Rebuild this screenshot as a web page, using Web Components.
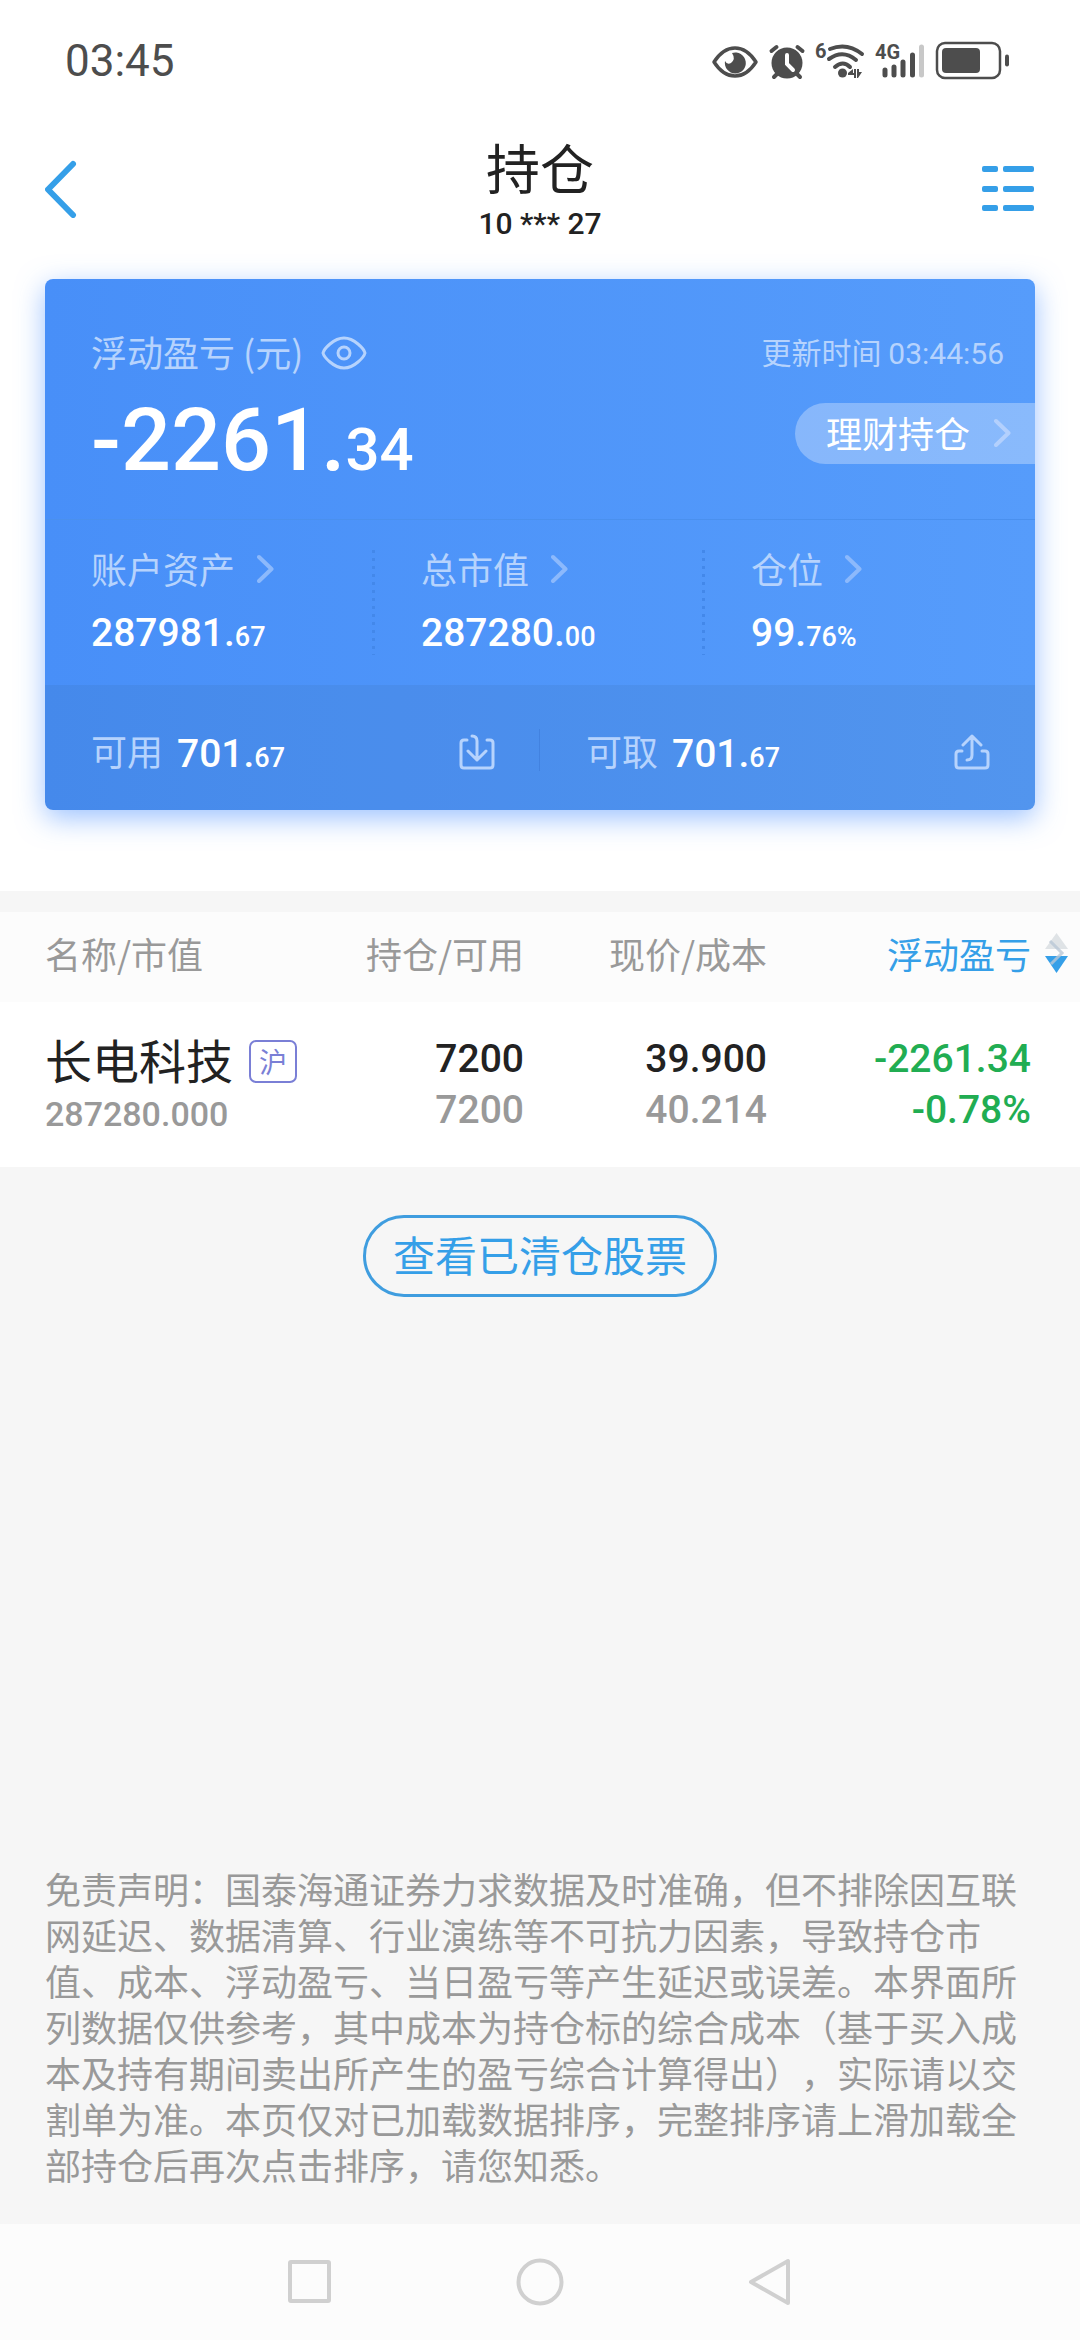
<!DOCTYPE html>
<html lang="zh-CN">
<head>
<meta charset="utf-8">
<meta name="viewport" content="width=device-width, initial-scale=1">
<title>持仓</title>
<style>
  body {
    margin: 0;
    font-family: "Noto Sans CJK SC", "Noto Sans", sans-serif;
    color: #222;
    background: #f6f6f6;
    --number-font: Roboto, "Noto Sans CJK SC", sans-serif;
  }
</style>
</head>
<body>
<holdings-page></holdings-page>

<!-- Page -->
<template id="holdings-page">
  <style>
    :host { display: flex; flex-direction: column; min-height: 100vh; }
    .top { background: #fff; padding-bottom: 81px; margin-bottom: 21px; }
    outline-button { align-self: center; margin: 48px 0; }
    disclaimer-note { margin-top: auto; }
  </style>
  <div class="top">
    <status-bar></status-bar>
    <page-header>持仓<span slot="account">10 *** 27</span></page-header>
    <profit-card></profit-card>
  </div>
  <holdings-table></holdings-table>
  <outline-button>查看已清仓股票</outline-button>
  <disclaimer-note>免责声明：国泰海通证券力求数据及时准确，但不排除因互联网延迟、数据清算、行业演练等不可抗力因素，导致持仓市值、成本、浮动盈亏、当日盈亏等产生延迟或误差。本界面所列数据仅供参考，其中成本为持仓标的综合成本（基于买入成本及持有期间卖出所产生的盈亏综合计算得出），实际请以交割单为准。本页仅对已加载数据排序，完整排序请上滑加载全部持仓后再次点击排序，请您知悉。</disclaimer-note>
  <nav-bar></nav-bar>
</template>

<!-- Phone status bar -->
<template id="status-bar">
  <style>
    :host {
      box-sizing: border-box;
      display: flex; align-items: center; justify-content: space-between;
      height: 116px; padding: 5px 71px 0 65px;
      color: #4d4d4d; font-family: var(--number-font); font-size: 44px;
    }
    .icons { display: flex; align-items: center; gap: 11px; }
    svg { display: block; overflow: visible; fill: none; stroke: currentColor; stroke-linecap: round; }
    .solid { fill: currentColor; stroke: none; }
    text { fill: currentColor; stroke: none; font-size: 20px; font-weight: 700; }
  </style>
  <span>03:45</span>
  <div class="icons">
    <svg width="46" height="40" viewBox="0 0 46 40">
      <path d="M2 21Q11 7 23 7Q35 7 44 21Q35 35 23 35Q11 35 2 21Z" stroke-width="3.500" stroke-linejoin="round"/>
      <path class="solid" d="M20 12A10.500 10.500 0 1 1 13 20Q15 24 19 22Q24 18 20 12Z"/>
    </svg>
    <svg width="36" height="40" viewBox="0 0 36 40">
      <circle class="solid" cx="18" cy="22" r="15.500"/>
      <path d="M2.500 10L7.500 6M33.500 10L28.500 6M5 36L9 32M31 36L27 32" stroke-width="4"/>
      <path d="M18 14V23L24 29" stroke="#fff" stroke-width="4"/>
    </svg>
    <svg width="48" height="40" viewBox="0 0 48 40">
      <text x="-1" y="17">6</text>
      <path d="M14 8Q31 1 46 13M13 18Q27 8 40 19M19 26Q27 19 34 26" stroke-width="4"/>
      <circle class="solid" cx="26.500" cy="32" r="4.500"/>
      <path class="solid" d="M32 32L37 28V32H38V28H40V37H38V34H32ZM41 28H43V31H46L42 37H41Z"/>
    </svg>
    <svg width="50" height="40" viewBox="0 0 50 40">
      <text x="0" y="18">4G</text>
      <path d="M10 29V34M19 26V34M28 21V34M37.500 14V34" stroke-width="5"/>
      <path d="M46.500 6V34" stroke="#c8c8c8" stroke-width="5"/>
    </svg>
    <svg width="73" height="40" viewBox="0 0 73 40">
      <rect x="1" y="2" width="63" height="35" rx="8" stroke-width="2.500"/>
      <rect class="solid" x="6" y="7" width="38" height="25" rx="4"/>
      <path d="M71 15.500V23.500" stroke-width="4"/>
    </svg>
  </div>
</template>

<!-- Title bar with back and menu buttons -->
<template id="page-header">
  <style>
    :host {
      display: grid; grid-template-columns: 60px 1fr 60px; align-items: center;
      padding: 19px 45px 37px;
    }
    h1 { margin: 0 0 7px; font-size: 54px; font-weight: 400; line-height: 64px; }
    .title { text-align: center; }
    .account { font-family: var(--number-font); font-size: 30px; font-weight: 500; line-height: 36px; }
    button { padding: 0; border: 0; background: none; color: #359fe8; }
    button:last-child { justify-self: end; }
    svg { display: block; }
  </style>
  <button aria-label="返回">
    <svg width="60" height="58" viewBox="0 0 60 58" fill="none" stroke="currentColor" stroke-width="6" stroke-linecap="round" stroke-linejoin="round"><path d="M28 4L3 29.500L28 55"/></svg>
  </button>
  <div class="title">
    <h1><slot></slot></h1>
    <div class="account"><slot name="account"></slot></div>
  </div>
  <button aria-label="菜单">
    <svg width="53" height="46" viewBox="0 0 53 46" fill="currentColor">
      <rect x="0" y="0" width="16" height="6" rx="2"/><rect x="21" y="0" width="31" height="6" rx="2"/>
      <rect x="0" y="20" width="16" height="6" rx="2"/><rect x="21" y="20" width="31" height="6" rx="2"/>
      <rect x="0" y="39" width="16" height="6" rx="2"/><rect x="21" y="39" width="31" height="6" rx="2"/>
    </svg>
  </button>
</template>

<template id="chevron-icon">
  <style>
    :host { display: block; }
    svg { display: block; }
  </style>
  <svg width="17" height="30" viewBox="0 0 17 30" fill="none" stroke="currentColor" stroke-width="4" stroke-linecap="round" stroke-linejoin="round"><path d="M2 4L14.500 16L2 28"/></svg>
</template>

<!-- Number with a smaller fraction -->
<template id="money-value">
  <style>
    :host { display: block; color: #fff; font-family: var(--number-font); font-size: 39px; font-weight: 500; line-height: 48px; }
    small { font-size: var(--fraction-size, 27px); line-height: 1; }
  </style>
  <slot></slot><small><slot name="fraction"></slot></small>
</template>

<!-- Blue summary card -->
<template id="profit-card">
  <style>
    :host {
      display: block; margin: 0 45px; border-radius: 8px; overflow: hidden;
      color: #b6d3fd;
      background: linear-gradient(90deg, #488ff8, #569cfb);
      box-shadow: 0 8px 28px rgba(75, 144, 255, .55);
    }
    .summary {
      display: flex; justify-content: space-between;
      padding: 48px 0 31px 46px;
      border-bottom: 1px solid #4a90ee;
    }
    .label { display: flex; align-items: center; gap: 18px; font-size: 36px; line-height: 48px; }
    .label button { padding: 4px 0 0; border: 0; background: none; color: inherit; }
    .label svg { display: block; }
    .total { font-size: 88px; line-height: 96px; margin-top: 17px; --fraction-size: 60px; }
    .side { display: flex; flex-direction: column; align-items: flex-end; gap: 28px; }
    time { padding-right: 31px; font-size: 30px; line-height: 48px; }
    .clock { font-family: var(--number-font); line-height: 1; }
    .wealth {
      display: flex; align-items: center; gap: 24px;
      height: 61px; padding: 0 24px 3px 31px; border: 0; border-radius: 31px 0 0 31px;
      color: #fff; background: rgba(255, 255, 255, .3);
      font: inherit; font-size: 36px; line-height: 48px;
    }
    .wealth chevron-icon { color: #b3d0fd; }
    .stats, .funds { display: grid; grid-template-columns: repeat(3, 1fr); }
    .funds { grid-template-columns: 1fr 1fr; background: rgba(50, 90, 130, .1); }
  </style>
  <div class="summary">
    <div>
      <div class="label">
        <span>浮动盈亏 (元)</span>
        <button aria-label="隐藏金额">
          <svg width="46" height="34" viewBox="0 0 46 34" fill="none" stroke="currentColor" stroke-width="3" stroke-linejoin="round"><path d="M2 17Q3 13 9 8Q16 2 23 2Q30 2 37 8Q43 13 44 17Q43 21 37 26Q30 32 23 32Q16 32 9 26Q3 21 2 17Z"/><circle cx="23" cy="17" r="6"/></svg>
        </button>
      </div>
      <money-value class="total">-2261.<span slot="fraction">34</span></money-value>
    </div>
    <div class="side">
      <time>更新时间 <span class="clock">03:44:56</span></time>
      <button class="wealth">理财持仓<chevron-icon></chevron-icon></button>
    </div>
  </div>
  <div class="stats">
    <stat-item divider>账户资产<money-value slot="value">287981.<span slot="fraction">67</span></money-value></stat-item>
    <stat-item divider>总市值<money-value slot="value">287280.<span slot="fraction">00</span></money-value></stat-item>
    <stat-item>仓位<money-value slot="value">99.<span slot="fraction">76%</span></money-value></stat-item>
  </div>
  <div class="funds">
    <fund-item divider>可用<money-value slot="value">701.<span slot="fraction">67</span></money-value>
      <svg slot="icon" width="36" height="36" viewBox="0 0 36 36" fill="none" stroke="currentColor" stroke-width="3" stroke-linecap="round" stroke-linejoin="round"><path d="M8 6H5Q2 6 2 9V31Q2 34 5 34H31Q34 34 34 31V9Q34 6 31 6H28M13 2Q18 2 18 7V26M9 17L18 26L27 17"/></svg>
    </fund-item>
    <fund-item>可取<money-value slot="value">701.<span slot="fraction">67</span></money-value>
      <svg slot="icon" width="36" height="36" viewBox="0 0 36 36" fill="none" stroke="currentColor" stroke-width="3" stroke-linecap="round" stroke-linejoin="round"><path d="M8 17H5Q2 17 2 20V31Q2 34 5 34H31Q34 34 34 31V20Q34 17 31 17H28M13 26Q18 26 18 21V2M9 11L18 2L27 11"/></svg>
    </fund-item>
  </div>
</template>

<template id="stat-item">
  <style>
    :host { display: flex; justify-content: space-between; padding: 24px 0 28px 46px; }
    .label { display: flex; align-items: center; gap: 22px; margin-bottom: 17px; font-size: 36px; line-height: 48px; }
    chevron-icon { color: #8cb9fc; }
    .dots { display: none; width: 3px; height: 105px; margin-top: 6px; background: repeating-linear-gradient(#4388ea 0 3px, transparent 3px 8px); }
    :host([divider]) .dots { display: block; }
  </style>
  <div>
    <div class="label"><span><slot></slot></span><chevron-icon></chevron-icon></div>
    <slot name="value"></slot>
  </div>
  <div class="dots"></div>
</template>

<template id="fund-item">
  <style>
    :host { display: flex; align-items: center; padding: 37px 0 32px 46px; font-size: 36px; line-height: 48px; }
    .label { margin-right: 14px; }
    .value { padding-top: 8px; }
    button { margin-left: auto; padding: 4px 0 0; border: 0; background: none; color: inherit; }
    ::slotted(svg) { display: block; }
    .line { width: 1px; height: 42px; margin-left: 44px; }
    :host([divider]) .line { background: #4282e0; }
  </style>
  <span class="label"><slot></slot></span>
  <div class="value"><slot name="value"></slot></div>
  <button aria-label="转账"><slot name="icon"></slot></button>
  <div class="line"></div>
</template>

<!-- Positions -->
<template id="holdings-table">
  <style>
    :host { display: block; background: #fff; }
    table { width: 100%; table-layout: fixed; border-collapse: collapse; text-align: right; }
    th, td { padding: 0; vertical-align: top; }
    th { padding: 17px 0 25px; font-size: 36px; font-weight: 400; line-height: 48px; color: #999; background: #fcfcfc; }
    td { padding: 32px 0 31px; font-family: var(--number-font); font-size: 39px; font-weight: 500; line-height: 51px; }
    th:first-child { padding-left: 45px; text-align: left; }
    td:first-child { padding: 29px 0 30px 45px; text-align: left; }
    th:last-child { padding-right: 12px; }
    td:last-child { padding-right: 49px; color: #21ad52; }
    .first { width: 310px; }
    .middle { width: 243px; }
    .last { width: 313px; }
    .sort {
      display: flex; align-items: center; gap: 14px; margin-left: auto;
      padding: 0; border: 0; background: none; color: #359fe8; font: inherit;
    }
    .name {
      display: flex; align-items: center; gap: 16px; margin-bottom: 4px; white-space: nowrap;
      font-family: "Noto Sans CJK SC", sans-serif; font-size: 47px; font-weight: 400; line-height: 56px;
    }
    .market {
      width: 44px; margin-top: 4px; border: 2px solid #7a7fd6; border-radius: 7px;
      color: #7a7fd6; font-size: 28px; line-height: 39px; text-align: center;
    }
    .worth { font-size: 34px; line-height: 46px; }
    .sub { color: #999; }
  </style>
  <table>
    <colgroup><col class="first"><col><col class="middle"><col class="last"></colgroup>
    <thead>
      <tr>
        <th>名称/市值</th>
        <th>持仓/可用</th>
        <th>现价/成本</th>
        <th>
          <button class="sort">浮动盈亏
            <svg width="23" height="40" viewBox="0 0 23 40"><path fill="#dfe3e6" d="M11.500 0L23 16H0Z"/><path fill="#359fe8" d="M0 23H23L11.500 40Z"/><path d="M5 8L17 20L6 31" fill="none" stroke="#b9c7d6" stroke-opacity=".8" stroke-width="3"/></svg>
          </button>
        </th>
      </tr>
    </thead>
    <tbody>
      <tr>
        <td>
          <div class="name">长电科技<span class="market">沪</span></div>
          <div class="worth sub">287280.000</div>
        </td>
        <td>7200<div class="sub">7200</div></td>
        <td>39.900<div class="sub">40.214</div></td>
        <td>-2261.34<div>-0.78%</div></td>
      </tr>
    </tbody>
  </table>
</template>

<template id="outline-button">
  <style>
    :host { display: block; }
    button {
      display: block; height: 82px; padding: 0 27px 4px; border: 3px solid #3f9ddf; border-radius: 41px;
      background: none; color: #359fe8; font: inherit; font-size: 42px; line-height: 60px;
    }
  </style>
  <button><slot></slot></button>
</template>

<template id="disclaimer-note">
  <style>
    :host { display: block; padding: 0 45px 37px; color: #999; }
    p { margin: 0; font-size: 36px; line-height: 46px; text-spacing-trim: space-all; }
  </style>
  <p><slot></slot></p>
</template>

<!-- System navigation -->
<template id="nav-bar">
  <style>
    :host { display: flex; align-items: center; justify-content: center; gap: 182px; height: 116px; background: #fcfcfc; }
    button { padding: 0; border: 0; background: none; }
    svg { display: block; fill: none; stroke: #d0d0d0; stroke-width: 4; stroke-linejoin: round; }
  </style>
  <button aria-label="最近任务"><svg width="48" height="48" viewBox="0 0 48 48"><rect x="4" y="4" width="39" height="39" rx="1"/></svg></button>
  <button aria-label="主屏幕"><svg width="48" height="48" viewBox="0 0 48 48"><circle cx="24" cy="24" r="21.500"/></svg></button>
  <button aria-label="返回"><svg width="48" height="48" viewBox="0 0 48 48"><path d="M42 3V45L5 24Z"/></svg></button>
</template>

<script>
// Base element: clones the template that carries the element's own name
class TemplateElement extends HTMLElement {
    constructor() {
        super();
        this.attachShadow({ mode: "open" });
        const template = document.getElementById(this.localName);
        this.shadowRoot.appendChild(template.content.cloneNode(true));
    }
}

class StatusBar extends TemplateElement {}
class PageHeader extends TemplateElement {}
class ChevronIcon extends TemplateElement {}
class MoneyValue extends TemplateElement {}
class StatItem extends TemplateElement {}
class FundItem extends TemplateElement {}
class ProfitCard extends TemplateElement {}
class HoldingsTable extends TemplateElement {}
class OutlineButton extends TemplateElement {}
class DisclaimerNote extends TemplateElement {}
class NavBar extends TemplateElement {}
class HoldingsPage extends TemplateElement {}

customElements.define("status-bar", StatusBar);
customElements.define("page-header", PageHeader);
customElements.define("chevron-icon", ChevronIcon);
customElements.define("money-value", MoneyValue);
customElements.define("stat-item", StatItem);
customElements.define("fund-item", FundItem);
customElements.define("profit-card", ProfitCard);
customElements.define("holdings-table", HoldingsTable);
customElements.define("outline-button", OutlineButton);
customElements.define("disclaimer-note", DisclaimerNote);
customElements.define("nav-bar", NavBar);
customElements.define("holdings-page", HoldingsPage);
</script>
</body>
</html>
